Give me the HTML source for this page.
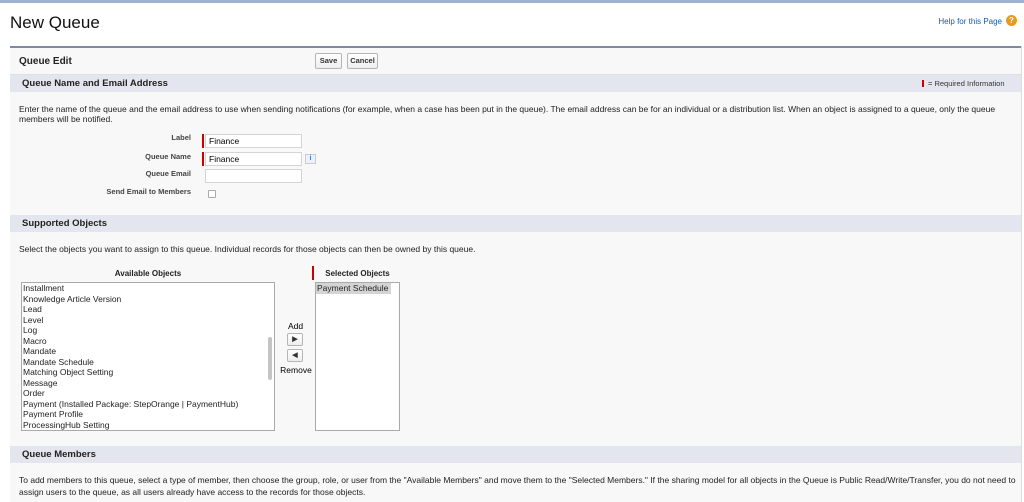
<!DOCTYPE html>
<html><head><style>
*{margin:0;padding:0;box-sizing:border-box}
body{width:1024px;height:502px;overflow:hidden;background:#fff;font-family:"Liberation Sans",Arial,sans-serif;color:#000;position:relative;font-size:8.5px}
.a{position:absolute}
.b{font-weight:bold}
.hdr{position:absolute;left:10px;width:1011px;height:17px;background:#e3e6ee}
.hdr span{position:absolute;left:12px;top:3px;font-size:9.5px;font-weight:bold;color:#222}
.inp{position:absolute;left:205px;width:97px;height:14px;background:#fff;border:1px solid #d4d4d4;font-size:8.5px;padding:1px 0 0 3px}
.rb{position:absolute;left:202px;width:2px;height:14px;background:#c00}
.lbl{position:absolute;right:833px;font-size:7.5px;font-weight:bold;color:#444;text-align:right;white-space:nowrap}
.btn{position:absolute;height:16px;border:1px solid #b5b5b5;border-radius:2px;background:linear-gradient(#fff,#eee);font-size:7.5px;font-weight:bold;text-align:center;line-height:14px;color:#333}
.list div{height:10.5px;line-height:10.5px;padding-left:1px;font-size:8.5px;color:#222;white-space:nowrap}
</style></head><body>
<div class="a" style="left:0;top:0;width:1024px;height:3px;background:#9db3d0"></div>
<div class="a" style="left:10px;top:13px;font-size:17px;color:#111">New Queue</div>
<div class="a" style="right:22px;top:17px;font-size:8px;color:#1a5b9e">Help for this Page</div>
<div class="a" style="right:7px;top:15px;width:11px;height:11px;border-radius:50%;background:#e59a22;color:#fff;font-size:8px;font-weight:bold;text-align:center;line-height:11px">?</div>
<div class="a" style="left:10px;top:46px;width:1011px;height:456px;background:#f8f8f8;border-top:2px solid #7f8aa0"></div>
<div class="a" style="left:1021px;top:46px;width:1px;height:456px;background:#ddd"></div>
<div class="a b" style="left:19px;top:56px;font-size:10px;color:#222">Queue Edit</div>
<div class="btn" style="left:315px;top:53px;width:27px">Save</div>
<div class="btn" style="left:347px;top:53px;width:31px">Cancel</div>
<div class="a" style="left:10px;top:74px;width:1011px;height:1px;background:#e0e0e0"></div>
<div class="hdr" style="top:75px"><span>Queue Name and Email Address</span></div>
<div class="a" style="left:922px;top:80px;width:2px;height:7px;background:#c00"></div>
<div class="a" style="left:928px;top:79px;font-size:7.5px;color:#333">= Required Information</div>
<div class="a" style="left:19px;top:104px;width:1000px;font-size:8.5px;line-height:10px;color:#222">Enter the name of the queue and the email address to use when sending notifications (for example, when a case has been put in the queue). The email address can be for an individual or a distribution list. When an object is assigned to a queue, only the queue members will be notified.</div>
<div class="lbl" style="top:133px">Label</div>
<div class="rb" style="top:134px"></div><div class="inp" style="top:134px">Finance</div>
<div class="lbl" style="top:152px">Queue Name</div>
<div class="rb" style="top:152px"></div><div class="inp" style="top:152px">Finance</div>
<div class="a" style="left:305px;top:154px;width:11px;height:10px;border:1px solid #ccc;background:#eef2f8;color:#3a7bd5;font-size:7px;font-weight:bold;text-align:center;line-height:8px">i</div>
<div class="lbl" style="top:169px">Queue Email</div>
<div class="inp" style="top:169px"></div>
<div class="lbl" style="top:187px">Send Email to Members</div>
<div class="a" style="left:208px;top:190px;width:8px;height:8px;border:1px solid #aaa;border-radius:1px;background:#fff"></div>
<div class="hdr" style="top:215px"><span>Supported Objects</span></div>
<div class="a" style="left:19px;top:244px;font-size:8.5px;color:#222">Select the objects you want to assign to this queue. Individual records for those objects can then be owned by this queue.</div>
<div class="a b" style="left:21px;top:269px;width:254px;text-align:center;font-size:8px;color:#222">Available Objects</div>
<div class="a list" style="left:21px;top:282px;width:254px;height:149px;background:#fff;border:1px solid #aaa;padding-top:0">
<div>Installment</div><div>Knowledge Article Version</div><div>Lead</div><div>Level</div><div>Log</div><div>Macro</div><div>Mandate</div><div>Mandate Schedule</div><div>Matching Object Setting</div><div>Message</div><div>Order</div><div>Payment (Installed Package: StepOrange | PaymentHub)</div><div>Payment Profile</div><div>ProcessingHub Setting</div></div>
<div class="a" style="left:268px;top:337px;width:4px;height:43px;border-radius:2px;background:#c4c4c4"></div>
<div class="a" style="left:287px;top:321px;width:17px;text-align:center;font-size:8.5px">Add</div>
<div class="btn" style="left:287px;top:333px;width:16px;height:13px;line-height:11px;font-size:7px">▶</div>
<div class="btn" style="left:287px;top:349px;width:16px;height:13px;line-height:11px;font-size:7px">◀</div>
<div class="a" style="left:279px;top:365px;width:34px;text-align:center;font-size:8.5px">Remove</div>
<div class="a" style="left:312px;top:266px;width:2px;height:14px;background:#c00"></div>
<div class="a b" style="left:315px;top:269px;width:85px;text-align:center;font-size:8px;color:#222">Selected Objects</div>
<div class="a list" style="left:315px;top:282px;width:85px;height:149px;background:#fff;border:1px solid #aaa;padding-top:0"><div style="background:#d4d4d4;width:75px">Payment Schedule</div></div>
<div class="hdr" style="top:446px"><span>Queue Members</span></div>
<div class="a" style="left:19px;top:474px;width:1000px;font-size:8.5px;line-height:12px;color:#222">To add members to this queue, select a type of member, then choose the group, role, or user from the "Available Members" and move them to the "Selected Members." If the sharing model for all objects in the Queue is Public Read/Write/Transfer, you do not need to assign users to the queue, as all users already have access to the records for those objects.</div>
</body></html>
